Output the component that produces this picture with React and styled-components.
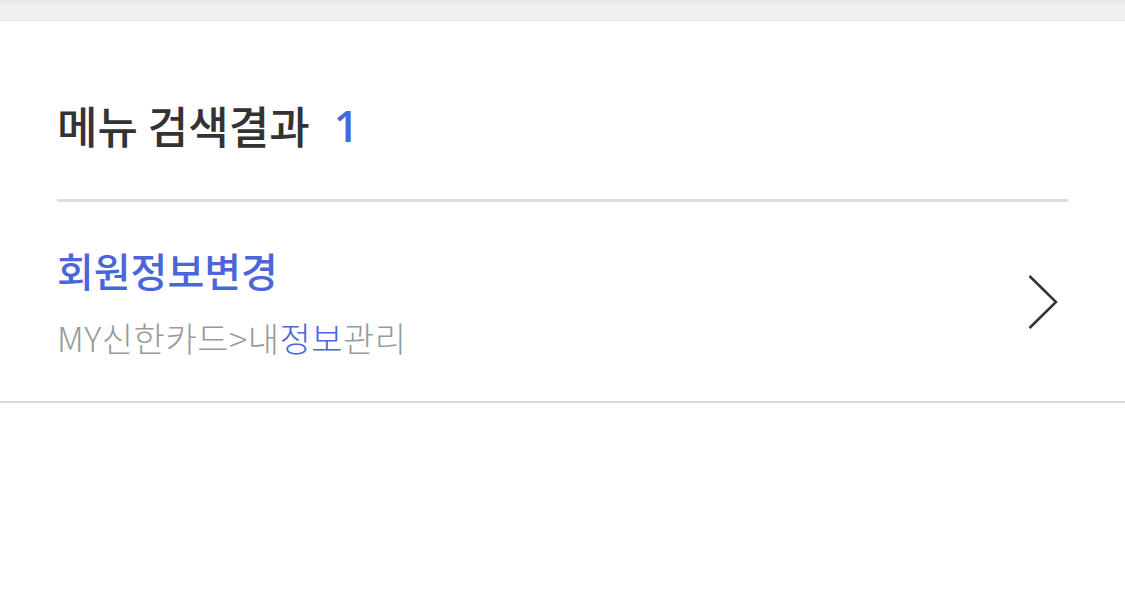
import React from "react";
import styled, { createGlobalStyle } from "styled-components";

const Global = createGlobalStyle`
  html, body { margin: 0; padding: 0; background: #fff; }
  body { font-family: "Noto Sans CJK KR", "Noto Sans", sans-serif; }
`;

const TopBand = styled.div`
  height: 17px;
  background: #efefef;
  border-top: 3px solid #e8e8e8;
  border-bottom: 1px solid #e3e3e3;
`;

const Section = styled.section`
  padding: 0 57px;
  border-bottom: 2px solid #d9d9d9;
  box-shadow: 0 3px 0 #e6e6e6;
`;

const Header = styled.div`
  height: 181px;
  box-sizing: border-box;
  border-bottom: 3px solid #dddddd;
  display: flex;
  align-items: center;
  gap: 24px;
  padding-top: 30px;
`;

const Title = styled.h2`
  margin: 0;
  font-size: 44px;
  line-height: 52px;
  font-weight: 500;
  color: #333;
`;

const Count = styled.span`
  font-family: "Open Sans", "Noto Sans", sans-serif;
  font-size: 44px;
  line-height: 52px;
  font-weight: 600;
  color: #4a66d8;
`;

const ResultRow = styled.a`
  display: flex;
  align-items: center;
  justify-content: space-between;
  height: 199px;
  text-decoration: none;
  box-sizing: border-box;
`;

const Texts = styled.div`
  display: flex;
  flex-direction: column;
  gap: 24px;
`;

const MenuName = styled.div`
  font-size: 40px;
  line-height: 48px;
  font-weight: 500;
  color: #4a66d8;
`;

const Path = styled.div`
  font-size: 34px;
  line-height: 40px;
  font-weight: 300;
  color: #999;
  letter-spacing: 0.5px;
`;

const Hit = styled.span`
  color: #4a66d8;
`;

const Chevron = styled.svg`
  width: 30px;
  height: 54px;
  margin-right: 10px;
`;

export default function App() {
  return (
    <>
      <Global />
      <TopBand />
      <Section>
        <Header>
          <Title>메뉴 검색결과</Title>
          <Count>1</Count>
        </Header>
        <ResultRow href="#">
          <Texts>
            <MenuName>회원정보변경</MenuName>
            <Path>
              MY신한카드&gt;내<Hit>정보</Hit>관리
            </Path>
          </Texts>
          <Chevron viewBox="0 0 30 54" fill="none">
            <path d="M1.5 1 L28 27 L1.5 53" stroke="#333" strokeWidth="2.5" />
          </Chevron>
        </ResultRow>
      </Section>
    </>
  );
}
